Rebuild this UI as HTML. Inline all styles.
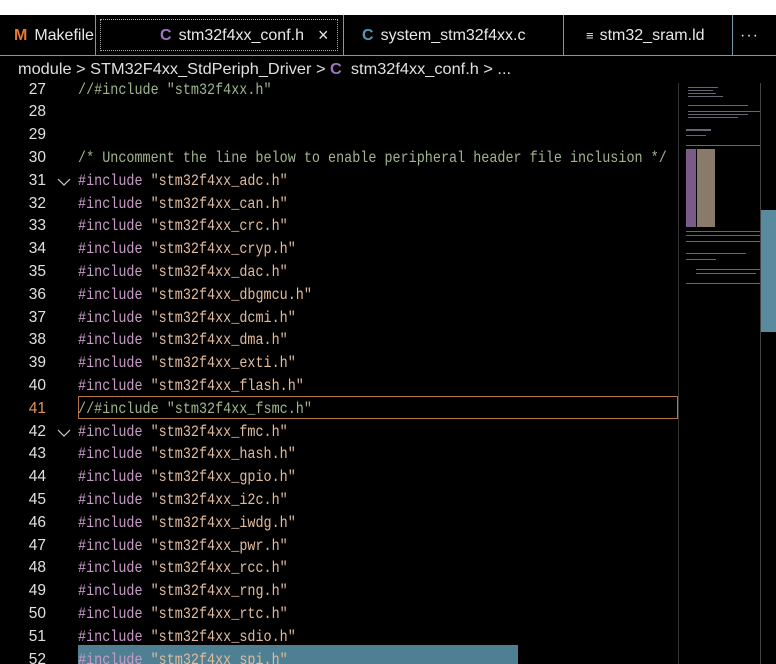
<!DOCTYPE html>
<html><head><meta charset="utf-8"><style>
*{margin:0;padding:0;box-sizing:border-box}
body{width:776px;height:664px;overflow:hidden;background:#000;position:relative;font-family:"Liberation Sans",sans-serif;color:#ddd}
.top{position:absolute;left:0;top:0;width:776px;height:15px;background:#fff}
.tabs{position:absolute;left:0;top:15px;width:776px;height:41px;background:#000;border-bottom:1px solid #7a9aa8}
.tab{position:absolute;top:0;height:41px;border-right:1px solid #7a9aa8;font-size:16px;line-height:41px;color:#e8e8e8;white-space:nowrap}
.ic{font-weight:bold;margin-right:7px}
.bc{position:absolute;left:18px;top:56px;height:26px;line-height:28px;font-size:16px;color:#e0e0e0;white-space:nowrap;transform:scaleX(1.02);transform-origin:left}
.bcl{position:absolute;left:0;top:82px;width:776px;height:1px;background:#7a9aa8}
.code{position:absolute;left:0;top:0;width:678px;height:664px;overflow:hidden}
.ln{position:absolute;left:0;width:46px;text-align:right;font-family:"Liberation Sans",sans-serif;font-size:15.5px;color:#e0e0e0;height:22.8px;line-height:22.8px}
.tx{position:absolute;left:78px;font-family:"Liberation Mono",monospace;font-size:16px;height:22.8px;line-height:22.8px;white-space:pre;transform:scaleX(0.84);transform-origin:left}
.k{color:#c99bc8}.s{color:#e0bb9d}.c{color:#9fb58e}
.fold{position:absolute;left:57px;height:22.8px}
</style></head><body>
<div class="top"></div>
<div class="tabs">
 <div class="tab" style="left:0;width:96px;padding-left:14px"><span class="ic" style="color:#e37933">M</span>Makefile</div>
 <div class="tab" style="left:96px;width:248px;padding-left:0"><div style="position:absolute;left:4px;top:4px;width:238px;height:32px;border:1px dotted #aaa"></div><span style="position:absolute;left:64px"><span class="ic" style="color:#a074c4">C</span>stm32f4xx_conf.h</span><span style="position:absolute;left:222px;font-size:18px">×</span></div>
 <div class="tab" style="left:344px;width:220px;padding-left:18px"><span class="ic" style="color:#519aba">C</span>system_stm32f4xx.c</div>
 <div class="tab" style="left:564px;width:169px;padding-left:22px"><span style="font-size:13px;margin-right:6px">≡</span>stm32_sram.ld</div>
 <div class="tab" style="left:733px;width:43px;border:none;padding-left:7px;letter-spacing:1px">···</div>
</div>
<div class="bc">module &gt; STM32F4xx_StdPeriph_Driver &gt; <span style="color:#a074c4;font-weight:bold">C</span>&nbsp; stm32f4xx_conf.h &gt; ...</div>
<div class="code">
<div style="position:absolute;left:78px;top:396px;width:600px;height:23px;border:1px solid #b5744a"></div>
<div style="position:absolute;left:78px;top:645px;width:440px;height:19px;background:#4e7f92"></div>
<div id="c"></div>
</div>
<div style="position:absolute;left:682px;top:83px;width:94px;height:581px;background:#000"></div>
<svg style="position:absolute;left:686px;top:85px" width="74" height="200">
<g fill="#667">
<rect x="2" y="2" width="30" height="1"/><rect x="2" y="5" width="25" height="1"/><rect x="2" y="8" width="28" height="1"/><rect x="2" y="11" width="35" height="1"/>
<rect x="2" y="20" width="60" height="1"/><rect x="2" y="26" width="72" height="1"/><rect x="2" y="29" width="60" height="1"/><rect x="2" y="32" width="50" height="1"/>
<rect x="0" y="44" width="25" height="2"/><rect x="0" y="50" width="20" height="1"/><rect x="0" y="60" width="74" height="1"/>
</g>
<g fill="#7a5a8a"><rect x="0" y="64" width="10" height="78"/></g>
<g fill="#8a7a6a"><rect x="11" y="64" width="18" height="78"/></g>
<g fill="#667"><rect x="0" y="146" width="74" height="1"/><rect x="0" y="150" width="74" height="1"/><rect x="0" y="156" width="74" height="1"/><rect x="0" y="168" width="60" height="1"/><rect x="0" y="174" width="30" height="1"/><rect x="10" y="184" width="64" height="1"/><rect x="10" y="188" width="60" height="1"/><rect x="0" y="198" width="74" height="1"/></g>
</svg>
<div style="position:absolute;left:678px;top:83px;width:1px;height:581px;background:#333"></div>
<div style="position:absolute;left:760px;top:83px;width:1px;height:581px;background:#444"></div>
<div style="position:absolute;left:761px;top:210px;width:15px;height:122px;background:#5a8a9e"></div>
<script>
var L=[[27,'<span class="c">//#include "stm32f4xx.h"</span>'],[28,''],[29,''],
[30,'<span class="c">/* Uncomment the line below to enable peripheral header file inclusion */</span>']];
var f=['adc','can','crc','cryp','dac','dbgmcu','dcmi','dma','exti','flash','#fsmc','fmc','hash','gpio','i2c','iwdg','pwr','rcc','rng','rtc','sdio','spi'];
f.forEach(function(n,i){var ln=31+i;if(n[0]=='#')L.push([ln,'<span class="c">//#include "stm32f4xx_'+n.slice(1)+'.h"</span>']);else L.push([ln,'<span class="k">#include</span> <span class="s">"stm32f4xx_'+n+'.h"</span>']);});
var h='';L.forEach(function(l,i){var t=78.5+i*22.8;h+='<div class="ln" style="top:'+t+'px;'+(l[0]==41?'color:#e0915a':'')+'">'+l[0]+'</div><div class="tx" style="top:'+t+'px">'+l[1]+'</div>';if(l[0]==31||l[0]==42)h+='<svg class="fold" style="top:'+(t+7)+'px;height:10px" width="14" height="10"><path d="M1 2 L7 8 L13 2" fill="none" stroke="#ccc" stroke-width="1.2"/></svg>';});
document.getElementById('c').innerHTML=h;
</script>
</body></html>
